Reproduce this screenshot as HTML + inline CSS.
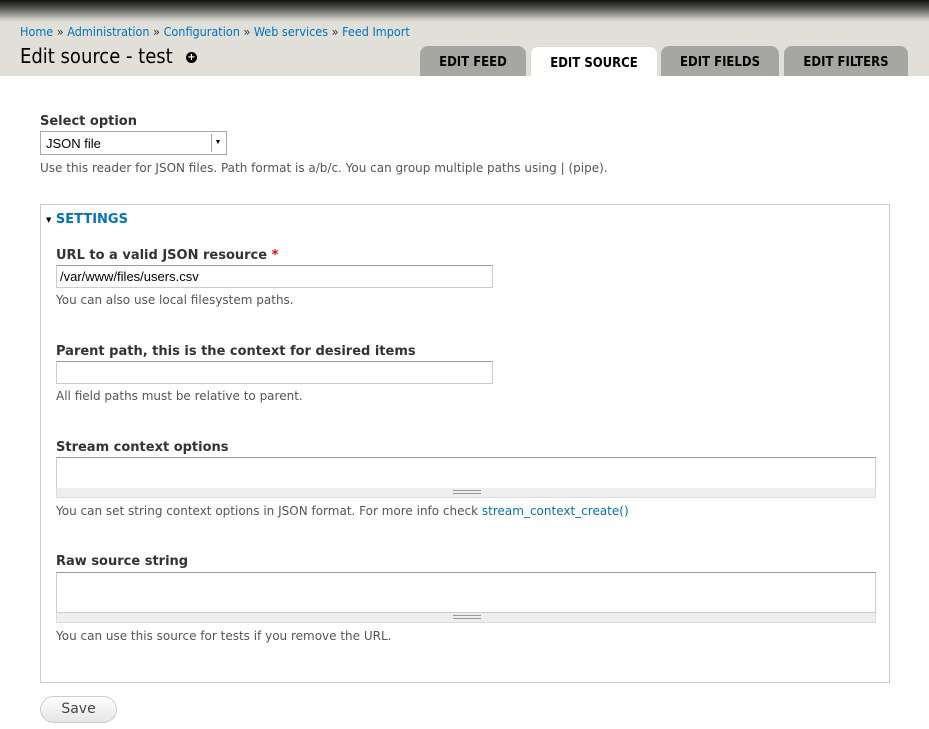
<!DOCTYPE html>
<html><head><style>
body{margin:0;width:929px;height:729px;background:#fff;font-family:"DejaVu Sans",sans-serif;color:#333;position:relative;overflow:hidden}
.hdr{position:absolute;left:0;top:0;width:929px;height:76px;background:#e0e0d8}
.grad{position:absolute;left:0;top:0;width:929px;height:22px;background:linear-gradient(#111,#5a5a58 40%,#c8c8c0 85%,#e0e0d8)}
a{color:#0074bd;text-decoration:none}
.abs{position:absolute;white-space:nowrap}
.bc{left:20px;top:24px;font-size:12.5px;font-family:"DejaVu Sans Condensed",sans-serif}
.bc span{color:#333}
h1{position:absolute;left:20px;top:44px;margin:0;font-weight:normal;font-size:20px;color:#000;font-family:"DejaVu Sans Condensed",sans-serif}
.plus{position:absolute;left:186px;top:53px;width:11px;height:11px;border-radius:50%;background:#000;color:#fff;font:bold 10px/11px "DejaVu Sans";text-align:center}
.tab{position:absolute;top:46px;height:30px;background:#a6a7a2;border-radius:8px 8px 0 0;font-weight:bold;font-size:13px;color:#000;text-align:center;line-height:34px;font-family:"DejaVu Sans Condensed",sans-serif}
.tab.act{background:#fff;border:1px solid #ddd;border-bottom:none;height:29px}
label,.lbl{position:absolute;font-weight:bold;font-size:13px;color:#333;white-space:nowrap}
.desc{position:absolute;font-size:12px;color:#555;white-space:nowrap}
.inp{position:absolute;border:1px solid #ccc;border-top-color:#999;background:#fff;height:21px;font:13px "Liberation Sans",sans-serif;color:#000;line-height:21px;padding-left:3px;box-sizing:border-box}
.ta{position:absolute;left:56px;width:820px;border:1px solid #ccc;border-top-color:#999;box-sizing:border-box;height:32px;background:#fff}
.grip{position:absolute;left:56px;width:820px;height:10px;background:#eee;border:1px solid #ddd;border-top:none;box-sizing:border-box}
.grip:after{content:"";position:absolute;left:396px;top:2px;width:28px;height:2px;border-top:1px solid #999;border-bottom:1px solid #999}
</style></head><body>
<div class="hdr"><div class="grad"></div></div>
<div class="abs bc"><a>Home</a> <span>»</span> <a>Administration</a> <span>»</span> <a>Configuration</a> <span>»</span> <a>Web services</a> <span>»</span> <a>Feed Import</a></div>
<h1>Edit source - test</h1>
<div class="plus" style="top:52px">+</div>
<div class="tab" style="left:420px;width:106px">EDIT FEED</div>
<div class="tab act" style="left:530px;width:126px">EDIT SOURCE</div>
<div class="tab" style="left:661px;width:118px">EDIT FIELDS</div>
<div class="tab" style="left:784px;width:124px">EDIT FILTERS</div>

<label style="left:40px;top:114px">Select option</label>
<div class="inp" style="left:40px;top:131px;width:187px;height:24px;border:1px solid #aaa;line-height:24px;padding-left:5px">JSON file<span style="position:absolute;right:2px;top:2px;width:12px;height:18px;border-left:1px solid #aaa;font-size:7px;text-align:center;line-height:18px">▼</span></div>
<div class="desc" style="left:40px;top:161px">Use this reader for JSON files. Path format is a/b/c. You can group multiple paths using | (pipe).</div>

<div style="position:absolute;left:40px;top:204px;width:850px;height:479px;border:1px solid #ccc;box-sizing:border-box"></div>
<div class="lbl" style="left:46px;top:212px;color:#0074bd"><span style="font-size:7px;color:#000;vertical-align:1px">▼</span> SETTINGS</div>

<label style="left:56px;top:248px">URL to a valid JSON resource <span style="color:#e00">*</span></label>
<div class="inp" style="left:56px;top:265px;width:437px;height:23px">/var/www/files/users.csv</div>
<div class="desc" style="left:56px;top:293px">You can also use local filesystem paths.</div>

<label style="left:56px;top:344px">Parent path, this is the context for desired items</label>
<div class="inp" style="left:56px;top:361px;width:437px;height:23px"></div>
<div class="desc" style="left:56px;top:389px">All field paths must be relative to parent.</div>

<label style="left:56px;top:440px">Stream context options</label>
<div class="ta" style="top:457px"></div><div class="grip" style="top:488px"></div>
<div class="desc" style="left:56px;top:504px">You can set string context options in JSON format. For more info check <a>stream_context_create()</a></div>

<label style="left:56px;top:554px">Raw source string</label>
<div class="ta" style="top:572px;height:41px"></div><div class="grip" style="top:613px"></div>
<div class="desc" style="left:56px;top:629px">You can use this source for tests if you remove the URL.</div>

<div style="position:absolute;left:40px;top:696px;width:77px;height:27px;border:1px solid #ccc;border-radius:14px;background:linear-gradient(#fff,#e5e5e5);box-sizing:border-box;text-align:center;line-height:25px;font-size:14px;color:#444">Save</div>
</body></html>
